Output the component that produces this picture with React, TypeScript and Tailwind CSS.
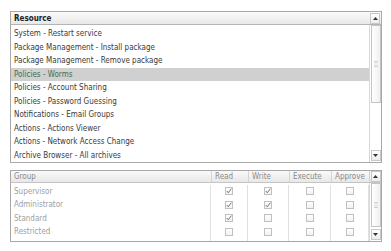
const resources = [
  "System - Restart service",
  "Package Management - Install package",
  "Package Management - Remove package",
  "Policies - Worms",
  "Policies - Account Sharing",
  "Policies - Password Guessing",
  "Notifications - Email Groups",
  "Actions - Actions Viewer",
  "Actions - Network Access Change",
  "Archive Browser - All archives",
];

const groups: { name: string; perms: boolean[] }[] = [
  { name: "Supervisor", perms: [true, true, false, false] },
  { name: "Administrator", perms: [true, true, false, false] },
  { name: "Standard", perms: [true, false, false, false] },
  { name: "Restricted", perms: [false, false, false, false] },
  { name: "", perms: [false, false, false, false] },
];

function Arrow({ up }: { up?: boolean }) {
  return (
    <div className="h-[11px] w-[10px] flex items-center justify-center bg-gradient-to-b from-white to-[#ececec] border border-[#c8c8c8]">
      <svg width="5" height="3" viewBox="0 0 5 3">
        {up ? <path d="M0 3 L2.5 0 L5 3 Z" fill="#333" /> : <path d="M0 0 L2.5 3 L5 0 Z" fill="#333" />}
      </svg>
    </div>
  );
}

function Scrollbar({ thumb }: { thumb: string }) {
  return (
    <div className="w-[12px] flex flex-col items-center bg-white border-l border-[#d8d8d8]">
      <div className="flex-1 w-[10px] flex flex-col">
        <div className={`${thumb} w-[10px] border border-[#c4c4c4] bg-gradient-to-r from-white to-[#f0f0f0] flex items-center justify-center`}>
          <div className="w-[4px] h-[6px] border-y border-[#d0d0d0] bg-[#ececec]" />
        </div>
      </div>
      <div className="pb-[1px]">
        <Arrow />
      </div>
    </div>
  );
}

function Check({ on }: { on: boolean }) {
  return (
    <div className="w-[8px] h-[8px] border border-[#c0c0c0] bg-gradient-to-b from-white to-[#f2f2f2] flex items-center justify-center">
      {on && (
        <svg width="6" height="6" viewBox="0 0 6 6">
          <path d="M0.8 3 L2.3 4.8 L5.4 0.6" fill="none" stroke="#777" strokeWidth="1" />
        </svg>
      )}
    </div>
  );
}

const colW = ["w-[37px]", "w-[41px]", "w-[42px]", "w-[38px]"];
const colNames = ["Read", "Write", "Execute", "Approve"];

export default function App() {
  return (
    <div className="w-[391px] h-[251px] bg-white pt-[11px] pl-[10px]" style={{ fontFamily: '"DejaVu Sans Condensed", "DejaVu Sans", Verdana, sans-serif' }}>
      {/* resource list */}
      <div className="w-[372px] border border-[#a8a8a8] flex flex-col">
        <div className="h-[13px] flex border-b border-[#b4b4b4] bg-gradient-to-b from-[#fafafa] to-[#e8e8e8]">
          <div className="flex-1 pl-[3px] text-[8px] font-bold leading-[13px] text-[#222]">Resource</div>
          <div className="w-[12px] flex items-center justify-center">
            <Arrow up />
          </div>
        </div>
        <div className="h-[137px] flex">
          <div className="flex-1 pt-[2px]">
            {resources.map((r, i) => (
              <div
                key={r}
                className={`h-[13.5px] pl-[3px] text-[8px] leading-[13.5px] ${i === 3 ? "bg-[#d0d0d0] text-[#3f6e4c]" : "text-[#3a3a3a]"}`}
              >
                {r}
              </div>
            ))}
          </div>
          <Scrollbar thumb="h-[78px]" />
        </div>
      </div>

      {/* group permissions */}
      <div className="mt-[7px] w-[372px] h-[72px] border border-[#a8a8a8] flex flex-col overflow-hidden">
        <div className="h-[12px] flex border-b border-[#c4c4c4] bg-gradient-to-b from-[#fafafa] to-[#e8e8e8] text-[8px] leading-[12px] text-[#8a8a8a]">
          <div className="flex-1 pl-[3px] border-r border-[#d4d4d4]">Group</div>
          {colNames.map((c, i) => (
            <div key={c} className={`${colW[i]} pl-[3px] border-r border-[#d4d4d4] overflow-hidden whitespace-nowrap`}>
              {c}
            </div>
          ))}
          <div className="w-[11px] flex items-center justify-center">
            <Arrow up />
          </div>
        </div>
        <div className="flex-1 flex overflow-hidden">
          <div className="flex-1 flex flex-col pt-[1.5px]">
            {groups.map((g, gi) => (
              <div key={gi} className="h-[13.5px] shrink-0 flex text-[8px] leading-[13.5px] text-[#a0a0a0]">
                <div className="flex-1 pl-[3px] border-r border-[#e0e0e0]">{g.name}</div>
                {g.perms.map((p, i) => (
                  <div key={i} className={`${colW[i]} flex items-center justify-center border-r border-[#e0e0e0]`}>
                    <Check on={p} />
                  </div>
                ))}
              </div>
            ))}
          </div>
          <Scrollbar thumb="h-[44px]" />
        </div>
      </div>
    </div>
  );
}
